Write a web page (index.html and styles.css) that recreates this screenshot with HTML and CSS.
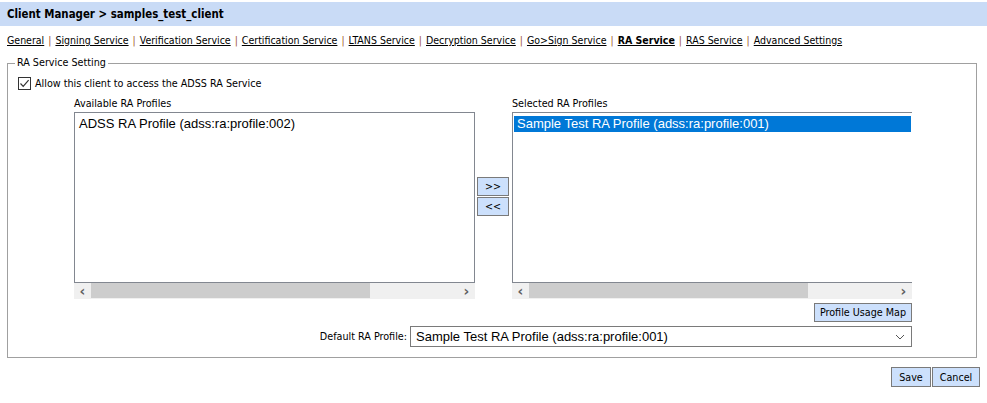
FILE: index.html
```html
<!DOCTYPE html>
<html>
<head>
<meta charset="utf-8">
<link rel="stylesheet" href="styles.css">
</head>
<body>
<div class="header">Client Manager &gt; samples_test_client</div>
<div class="tabs">
  <a>General</a><span class="sep">|</span><a>Signing Service</a><span class="sep">|</span><a>Verification Service</a><span class="sep">|</span><a>Certification Service</a><span class="sep">|</span><a>LTANS Service</a><span class="sep">|</span><a>Decryption Service</a><span class="sep">|</span><a>Go&gt;Sign Service</a><span class="sep">|</span><a class="active">RA Service</a><span class="sep">|</span><a>RAS Service</a><span class="sep">|</span><a>Advanced Settings</a>
</div>
<fieldset class="setting">
  <legend>RA Service Setting</legend>
  <div class="check-row">
    <span class="checkbox"><svg width="11" height="11" viewBox="0 0 11 11"><path d="M1.5 5.5 L4.2 8.3 L9.6 2.2" fill="none" stroke="#333" stroke-width="1.2"/></svg></span>
    <span>Allow this client to access the ADSS RA Service</span>
  </div>
  <div class="lists">
    <div class="col col-left">
      <div class="caption">Available RA Profiles</div>
      <div class="listbox">
        <div class="item">ADSS RA Profile (adss:ra:profile:002)</div>
      </div>
      <div class="hscroll">
        <span class="arrow">&lsaquo;</span>
        <span class="track"><span class="thumb"></span></span>
        <span class="arrow">&rsaquo;</span>
      </div>
    </div>
    <div class="movers">
      <button class="btn mover">&gt;&gt;</button>
      <button class="btn mover">&lt;&lt;</button>
    </div>
    <div class="col col-right">
      <div class="caption">Selected RA Profiles</div>
      <div class="listbox no-right">
        <div class="item selected">Sample Test RA Profile (adss:ra:profile:001)</div>
      </div>
      <div class="hscroll">
        <span class="arrow">&lsaquo;</span>
        <span class="track"><span class="thumb"></span></span>
        <span class="arrow">&rsaquo;</span>
      </div>
      <div class="usage-row"><button class="btn usage">Profile Usage Map</button></div>
    </div>
  </div>
  <div class="default-row">
    <span class="default-label">Default RA Profile:</span>
    <div class="select">
      <span>Sample Test RA Profile (adss:ra:profile:001)</span>
      <svg width="10" height="6" viewBox="0 0 10 6"><path d="M1 1 L5 5 L9 1" fill="none" stroke="#555" stroke-width="1"/></svg>
    </div>
  </div>
</fieldset>
<div class="actions">
  <button class="btn action save">Save</button><button class="btn action cancel">Cancel</button>
</div>
</body>
</html>
```
FILE: styles.css
```css
html, body {
  margin: 0;
  padding: 0;
  background: #fff;
}
body {
  font-family: "DejaVu Sans Condensed", "Liberation Sans", sans-serif;
  font-size: 10.7px;
  color: #000;
}
.header {
  margin-top: 2px;
  height: 24px;
  line-height: 24px;
  padding-left: 7px;
  background: #c9dbf6;
  font-family: "DejaVu Sans Condensed", "Liberation Sans", sans-serif;
  font-weight: bold;
  font-size: 11.4px;
}
.tabs {
  margin-top: 6px;
  height: 16px;
  line-height: 16px;
  padding-left: 7px;
  white-space: nowrap;
  font-size: 10.5px;
}
.tabs a {
  color: #000;
  text-decoration: underline;
}
.tabs a.active {
  font-weight: bold;
}
.tabs .sep {
  color: #a0522d;
  padding: 0 4px;
}
.setting {
  margin: 8px 10px 0 7px;
  padding: 0 0 10px 10px;
  border: 1px solid #a0a0a0;
  min-width: 0;
}
.setting legend {
  padding: 0 2px;
  margin-left: -3px;
  line-height: 14px;
}
.check-row {
  display: flex;
  align-items: center;
  gap: 4px;
  height: 14px;
  margin-top: 6px;
}
.checkbox {
  width: 11px;
  height: 11px;
  border: 1px solid #333;
  display: flex;
  align-items: center;
  justify-content: center;
  background: #fff;
}
.lists {
  display: flex;
  align-items: flex-start;
  margin-left: 56px;
  margin-top: 7px;
}
.col {
  display: flex;
  flex-direction: column;
}
.col-left {
  width: 401px;
}
.col-right {
  width: 400px;
}
.caption {
  height: 13px;
  line-height: 13px;
  margin-bottom: 2px;
}
.listbox {
  height: 166px;
  border: 1px solid #828790;
  background: #fff;
  padding: 3px 1px 0 1px;
  font-family: "Liberation Sans", Arial, sans-serif;
  font-size: 13px;
}
.listbox.no-right {
  border-right: none;
}
.item {
  height: 16px;
  line-height: 16px;
  padding-left: 3px;
  white-space: nowrap;
}
.item.selected {
  background: #0078d7;
  color: #fff;
}
.hscroll {
  display: flex;
  align-items: center;
  height: 16px;
  background: #f0f0f0;
}
.arrow {
  width: 17px;
  text-align: center;
  font-family: "DejaVu Sans", sans-serif;
  font-size: 14px;
  font-weight: bold;
  color: #606060;
  line-height: 16px;
}
.track {
  flex: 1;
  height: 16px;
  display: flex;
}
.thumb {
  display: block;
  width: 279px;
  height: 15px;
  background: #cdcdcd;
}
.movers {
  display: flex;
  flex-direction: column;
  gap: 1px;
  margin: 80px 3px 0 2px;
}
.btn {
  font-family: "DejaVu Sans Condensed", "Liberation Sans", sans-serif;
  font-size: 10.7px;
  background: #cce0fc;
  border: 1px solid #7a7a7a;
  color: #000;
  padding: 0;
  margin: 0;
}
.mover {
  width: 32px;
  height: 19px;
}
.usage-row {
  display: flex;
  justify-content: flex-end;
  margin-top: 4px;
}
.usage {
  width: 98px;
  height: 19px;
}
.default-row {
  display: flex;
  justify-content: flex-end;
  align-items: center;
  gap: 3px;
  margin-top: 4px;
  margin-right: 64px;
}
.select {
  width: 489px;
  height: 19px;
  border: 1px solid #7a7a7a;
  display: flex;
  align-items: center;
  justify-content: space-between;
  padding: 0 6px 0 5px;
  font-family: "Liberation Sans", Arial, sans-serif;
  font-size: 13px;
}
.actions {
  display: flex;
  justify-content: flex-end;
  margin: 9px 7px 0 0;
}
.action {
  height: 20px;
}
.save {
  width: 40px;
}
.cancel {
  width: 48px;
  margin-left: 1px;
}
```
